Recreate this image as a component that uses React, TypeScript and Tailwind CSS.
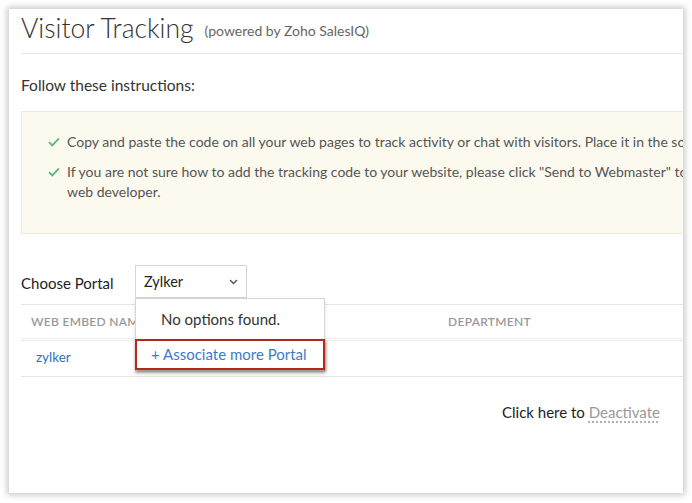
import React from 'react';

const font = { fontFamily: '"Lato", "Open Sans", sans-serif' };

const Check = () => (
    <svg width="12" height="10" viewBox="0 0 12 10" className="mt-[5px] shrink-0">
        <path d="M1 5.2 L4.3 8.4 L11 1.4" fill="none" stroke="#5fb57a" strokeWidth="1.8" />
    </svg>
);

const Chevron = () => (
    <svg width="9" height="6" viewBox="0 0 9 6">
        <path d="M1 1 L4.5 4.5 L8 1" fill="none" stroke="#555" strokeWidth="1.4" />
    </svg>
);

export default function App() {
    return (
        <div className="min-h-[503px] w-[692px] bg-white pl-[9px] pt-[9px]" style={font}>
            <div className="relative h-[484px] w-[674px] overflow-hidden bg-white shadow-[0_0_6px_2px_rgba(0,0,0,0.22)]">
                <div className="w-[820px] pl-[12px]">
                    <div className="flex h-[45px] items-end border-b border-[#e6e6e6] pb-[10px]">
                        <h1 className="text-[26.5px] leading-[30px] font-light text-[#333]">Visitor Tracking</h1>
                        <span className="ml-[11px] pb-[2px] text-[14px] text-[#666]">(powered by Zoho SalesIQ)</span>
                    </div>

                    <p className="mt-[21px] text-[15.5px] leading-[20px] text-[#333]">Follow these instructions:</p>

                    <div className="mt-[16px] h-[123px] border border-[#efeadb] bg-[#fcf9ee] pl-[26px] pt-[20px]">
                        <ul className="flex flex-col gap-[10px] text-[14px] leading-[20px] text-[#555]">
                            <li className="flex gap-[7px]">
                                <Check />
                                <span className="whitespace-nowrap">
                                    Copy and paste the code on all your web pages to track activity or chat with visitors. Place it in the source code
                                </span>
                            </li>
                            <li className="flex gap-[7px]">
                                <Check />
                                <span className="whitespace-nowrap">
                                    If you are not sure how to add the tracking code to your website, please click "Send to Webmaster" to mail it to your
                                    <br />
                                    web developer.
                                </span>
                            </li>
                        </ul>
                    </div>

                    <div className="mt-[31px] flex items-center">
                        <span className="w-[114px] pt-[3px] text-[15px] text-[#222]">Choose Portal</span>
                        <button className="flex h-[33px] w-[112px] items-center justify-between border border-[#d6d6d6] bg-white px-[8px] text-[14.5px] text-[#222]">
                            <span>Zylker</span>
                            <Chevron />
                        </button>
                    </div>

                    <table className="mt-[6px] w-[662px] border-collapse text-left">
                        <thead>
                            <tr className="h-[35px] border-t border-b-[3px] border-[#e6e6e6] border-b-[#ececec] [border-bottom-style:double]">
                                <th className="w-[427px] pl-[10px] text-[12px] font-semibold tracking-[0.3px] text-[#999]">WEB EMBED NAME</th>
                                <th className="text-[12px] font-semibold tracking-[0.3px] text-[#999]">DEPARTMENT</th>
                            </tr>
                        </thead>
                        <tbody>
                            <tr className="h-[37px] border-b border-[#e6e6e6]">
                                <td className="pb-[2px] pl-[15px] text-[13.5px] text-[#2e6fc0]">zylker</td>
                                <td />
                            </tr>
                        </tbody>
                    </table>

                    <div className="mt-[24px] flex w-[639px] justify-end text-[15px] text-[#222]">
                        <span>
                            Click here to{' '}
                            <span className="text-[#999] underline decoration-dotted decoration-[#999] underline-offset-[4px]">Deactivate</span>
                        </span>
                    </div>
                </div>

                <div className="absolute left-[126px] top-[289px] w-[190px] border border-[#d6d6d6] bg-white shadow-[0_2px_4px_rgba(0,0,0,0.12)]">
                    <div className="flex h-[40px] items-center pl-[25px] text-[15px] text-[#333]">No options found.</div>
                    <div className="mx-[-1px] mb-[1px] flex h-[31px] items-center border-2 border-[#b3281c] pl-[14px] text-[15px] text-[#3c7bcd] shadow-[1px_2px_3px_rgba(0,0,0,0.45)]">
                        + Associate more Portal
                    </div>
                </div>
            </div>
        </div>
    );
}
